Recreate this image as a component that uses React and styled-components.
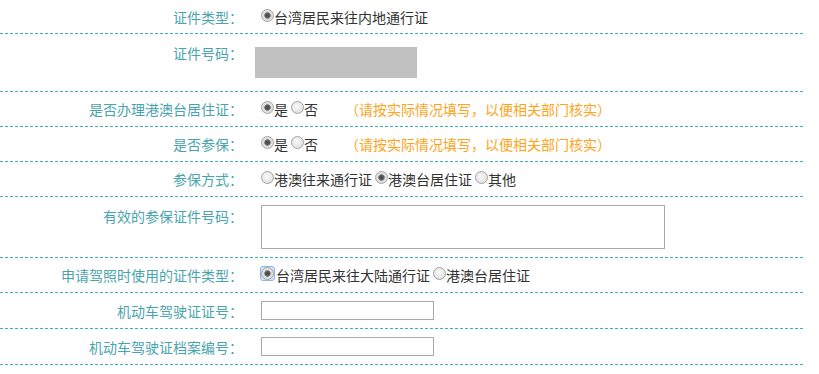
import React from 'react';
import styled, { createGlobalStyle, css } from 'styled-components';

const Global = createGlobalStyle`
  html, body { margin: 0; padding: 0; background: #fff; }
  body {
    font-family: "Noto Sans CJK SC", "Noto Sans", sans-serif;
    font-size: 14px;
    color: #333;
  }
`;

const Form = styled.div`
  width: 803px;
`;

const Row = styled.div`
  display: grid;
  grid-template-columns: 243px 1fr;
  column-gap: 12px;
  align-items: ${p => (p.$top ? 'start' : 'center')};
  padding: ${p => (p.$first ? '8px 0 8px' : '8px 0 9px')};
  background-image: repeating-linear-gradient(90deg, #3fb0b9 0 3px, transparent 3px 5px);
  background-size: 100% 1px;
  background-position: left bottom;
  background-repeat: no-repeat;
`;

const Label = styled.div`
  text-align: right;
  color: #4aa4ae;
  line-height: 18px;
  white-space: nowrap;
  padding-top: ${p => (p.$top ? '2px' : '0')};
`;

const Value = styled.div`
  display: flex;
  align-items: flex-start;
  line-height: 18px;
  white-space: nowrap;
`;

const Option = styled.label`
  display: inline-flex;
  align-items: flex-start;
  margin-left: ${p => (p.$first ? '6px' : '3px')};
  color: #333;
`;

const Radio = styled.span`
  flex: none;
  box-sizing: border-box;
  width: 13px;
  height: 13px;
  margin-top: ${p => (p.$focus ? '0' : '1px')};
  border-radius: 50%;
  border: 1px solid #a4a4a4;
  ${p =>
    p.$checked
      ? css`
          background: radial-gradient(circle at 50% 50%, #4a4a4a 0, #555 2px, #8a8a8a 3px, #dcdcdc 3.6px, #ececec 100%);
        `
      : css`
          background: radial-gradient(circle at 45% 40%, #fafafa 0, #e8e8e8 55%, #d2d2d2 100%);
        `}
`;

const FocusRing = styled.span`
  flex: none;
  display: inline-flex;
  box-sizing: border-box;
  width: 15px;
  height: 15px;
  margin-left: -1px;
  margin-right: 1px;
  border: 1px solid #8db5ee;
  border-radius: 3px;
  background: #d9e7fb;
`;

const Hint = styled.span`
  margin-left: 27px;
  color: #ffa41a;
`;

const Masked = styled.div`
  width: 162px;
  height: 31px;
  margin: 5px 0;
  background: #c0c0c0;
`;

const TextBox = styled.input`
  box-sizing: border-box;
  width: 173px;
  height: 19px;
  margin: 0 0 0 6px;
  padding: 0 2px;
  border: 1px solid #a9a9a9;
  font: inherit;
  outline: none;
`;

const TextArea = styled.textarea`
  display: block;
  box-sizing: border-box;
  width: 404px;
  height: 44px;
  margin: 0 0 0 6px;
  padding: 2px;
  border: 1px solid #a9a9a9;
  resize: none;
  font: inherit;
  outline: none;
`;

function Choice({ checked, first, focus, children }) {
  return (
    <Option $first={first}>
      {focus ? (
        <FocusRing>
          <Radio $checked={checked} $focus />
        </FocusRing>
      ) : (
        <Radio $checked={checked} />
      )}
      {children}
    </Option>
  );
}

export default function App() {
  return (
    <>
      <Global />
      <Form>
        <Row $first>
          <Label>证件类型：</Label>
          <Value>
            <Choice checked first>台湾居民来往内地通行证</Choice>
          </Value>
        </Row>
        <Row $top>
          <Label $top>证件号码：</Label>
          <Value>
            <Masked />
          </Value>
        </Row>
        <Row>
          <Label>是否办理港澳台居住证：</Label>
          <Value>
            <Choice checked first>是</Choice>
            <Choice>否</Choice>
            <Hint>（请按实际情况填写，以便相关部门核实）</Hint>
          </Value>
        </Row>
        <Row>
          <Label>是否参保：</Label>
          <Value>
            <Choice checked first>是</Choice>
            <Choice>否</Choice>
            <Hint>（请按实际情况填写，以便相关部门核实）</Hint>
          </Value>
        </Row>
        <Row>
          <Label>参保方式：</Label>
          <Value>
            <Choice first>港澳往来通行证</Choice>
            <Choice checked>港澳台居住证</Choice>
            <Choice>其他</Choice>
          </Value>
        </Row>
        <Row $top>
          <Label $top>有效的参保证件号码：</Label>
          <Value>
            <TextArea />
          </Value>
        </Row>
        <Row>
          <Label>申请驾照时使用的证件类型：</Label>
          <Value>
            <Choice checked first focus>台湾居民来往大陆通行证</Choice>
            <Choice>港澳台居住证</Choice>
          </Value>
        </Row>
        <Row>
          <Label>机动车驾驶证证号：</Label>
          <Value>
            <TextBox />
          </Value>
        </Row>
        <Row>
          <Label>机动车驾驶证档案编号：</Label>
          <Value>
            <TextBox />
          </Value>
        </Row>
      </Form>
    </>
  );
}
